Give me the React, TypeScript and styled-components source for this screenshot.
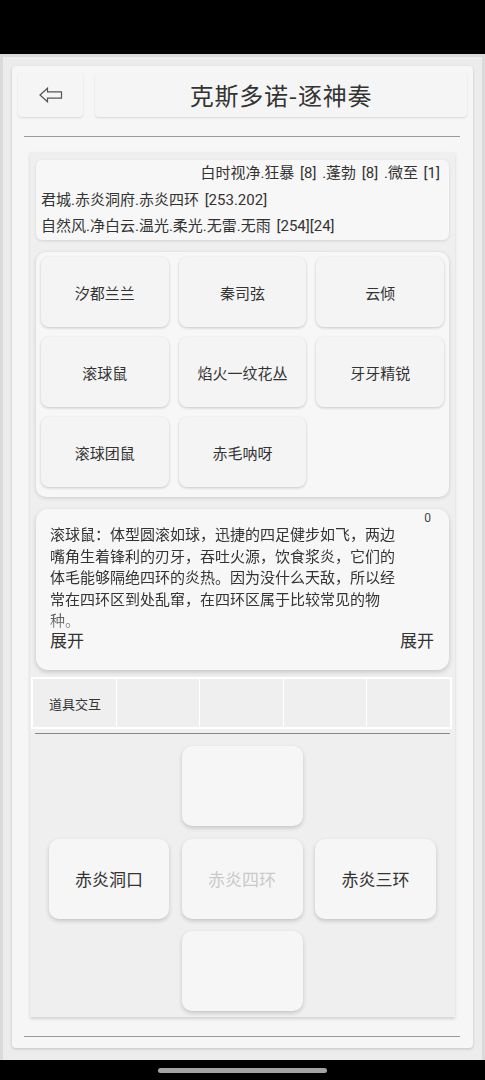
import React from 'react';
import styled, { createGlobalStyle } from 'styled-components';

const GlobalStyle = createGlobalStyle`
    html, body {
        margin: 0;
        padding: 0;
        background: #000;
    }
    body {
        font-family: Roboto, "Noto Sans CJK SC", sans-serif;
        color: #333;
    }
`

const Screen = styled.div`
    width: 485px;
    height: 1080px;
    display: flex;
    flex-direction: column;
    background: #000;
`

const StatusBar = styled.div`
    height: 54px;
    flex-shrink: 0;
`

const Frame = styled.div`
    height: 1006px;
    box-sizing: border-box;
    border: 3px solid #dadada;
    border-bottom: none;
    background: #ececec;
    padding: 9px 9px 12px;
`

const Card = styled.div`
    height: 100%;
    box-sizing: border-box;
    background: #f6f6f6;
    border-radius: 4px;
    box-shadow: 0 1px 3px rgba(0, 0, 0, 0.18);
    padding: 6px 6px 0;
    display: flex;
    flex-direction: column;
`

const Header = styled.div`
    display: flex;
    gap: 12px;
    height: 45px;
`

const HeaderBox = styled.div<{ $width?: number }>`
    ${ props => props.$width ? `width: ${ props.$width }px;` : 'flex: 1;' }
    display: flex;
    align-items: center;
    justify-content: center;
    background: #f5f5f5;
    border-radius: 4px;
    box-shadow: 0 1px 2px rgba(0, 0, 0, 0.12);
    font-family: "Noto Sans CJK SC", sans-serif;
    font-size: 24px;
    letter-spacing: 0.8px;
    color: #333;
`

const Divider = styled.div<{ $top: number }>`
    height: 1px;
    flex-shrink: 0;
    background: #9a9a9a;
    margin: ${ props => props.$top }px 7px 0 6px;
`

const Panel = styled.div`
    margin: 15px 12px 0;
    height: 865px;
    flex-shrink: 0;
    box-sizing: border-box;
    padding: 8px 6px 0;
    background: #efefef;
    box-shadow: 0 2px 3px rgba(0, 0, 0, 0.15);
    display: flex;
    flex-direction: column;
`

const InfoBox = styled.div`
    height: 80px;
    flex-shrink: 0;
    box-sizing: border-box;
    padding: 0 9px 0 5px;
    background: #f7f7f7;
    border-radius: 6px;
    box-shadow: 0 1px 3px rgba(0, 0, 0, 0.12);
    font-size: 15px;
    line-height: 26.5px;
    word-spacing: 2px;
`

const InfoLine = styled.div<{ $right?: boolean }>`
    text-align: ${ props => props.$right ? 'right' : 'left' };
    white-space: nowrap;
`

const GridBox = styled.div`
    margin-top: 12px;
    height: 245px;
    flex-shrink: 0;
    box-sizing: border-box;
    padding: 5px;
    background: #f7f7f7;
    border-radius: 10px;
    box-shadow: 0 1px 4px rgba(0, 0, 0, 0.15);
    display: grid;
    grid-template-columns: repeat(3, 1fr);
    grid-auto-rows: 70px;
    gap: 10px;
`

const NpcButton = styled.div`
    display: flex;
    align-items: center;
    justify-content: center;
    background: #f4f4f4;
    border-radius: 8px;
    box-shadow: 0 1px 3px rgba(0, 0, 0, 0.2);
    font-size: 15px;
    color: #333;
`

const DescBox = styled.div`
    margin-top: 12px;
    height: 161px;
    flex-shrink: 0;
    box-sizing: border-box;
    padding: 0 15px 0 14px;
    background: #f7f7f7;
    border-radius: 12px;
    box-shadow: 0 2px 5px rgba(0, 0, 0, 0.18);
    display: flex;
    flex-direction: column;
`

const DescTop = styled.div`
    display: flex;
    justify-content: space-between;
    align-items: flex-start;
`

const DescText = styled.div`
    width: 354px;
    margin-top: 14px;
    font-family: "Noto Sans CJK SC", sans-serif;
    font-size: 15px;
    line-height: 21.5px;
    height: 107.5px;
    overflow: hidden;
    color: #333;
    -webkit-mask-image: linear-gradient(to bottom, #000 78%, rgba(0, 0, 0, 0.45) 100%);
    mask-image: linear-gradient(to bottom, #000 78%, rgba(0, 0, 0, 0.45) 100%);
`

const Count = styled.div`
    margin: 2px 3px 0 0;
    font-size: 12px;
    line-height: 14px;
    color: #444;
`

const DescFoot = styled.div`
    display: flex;
    justify-content: space-between;
    font-size: 17px;
    line-height: 20px;
    color: #333;
`

const TabRow = styled.div`
    margin: 7px -3px 0 -5px;
    height: 52px;
    flex-shrink: 0;
    box-sizing: border-box;
    border: 2px solid #fff;
    background: #fff;
    display: grid;
    grid-template-columns: repeat(5, 1fr);
    gap: 1px;
`

const TabCell = styled.div`
    background: #efefef;
    display: flex;
    align-items: center;
    padding-left: 16px;
    font-size: 13px;
    color: #333;
`

const MapLine = styled.div`
    margin: 4px -1px 0;
    height: 1px;
    flex-shrink: 0;
    background: #888;
`

const MapGrid = styled.div`
    padding-top: 12px;
    display: grid;
    grid-template-columns: 120px 121px 121px;
    grid-auto-rows: 80px;
    column-gap: 12.5px;
    row-gap: 12.5px;
    justify-content: center;
`

const MapButton = styled.div<{ $col: number; $row: number; $disabled?: boolean }>`
    grid-column: ${ props => props.$col };
    grid-row: ${ props => props.$row };
    display: flex;
    align-items: center;
    justify-content: center;
    background: #f6f6f6;
    border-radius: 10px;
    box-shadow: 0 2px 4px rgba(0, 0, 0, 0.18);
    font-size: 17px;
    color: ${ props => props.$disabled ? '#cacaca' : '#333' };
`

const NavBar = styled.div`
    flex: 1;
    display: flex;
    justify-content: center;
    padding-top: 8px;
`

const HomePill = styled.div`
    width: 169px;
    height: 5px;
    border-radius: 3px;
    background: #a3a3a3;
`

const npcs = [ '汐都兰兰', '秦司弦', '云倾', '滚球鼠', '焰火一纹花丛', '牙牙精锐', '滚球团鼠', '赤毛呐呀' ];

const BackArrow = () => (
    <svg width="24" height="16" viewBox="0 0 24 16">
        <polygon points="1,8 8.5,1.2 8.5,4.8 22.5,4.8 22.5,11.2 8.5,11.2 8.5,14.8" fill="none" stroke="#555" strokeWidth="1.2" strokeLinejoin="miter"/>
    </svg>
);

const App: React.FC = () => {
    return (
        <Screen>
            <GlobalStyle/>
            <StatusBar/>
            <Frame>
                <Card>
                    <Header>
                        <HeaderBox $width={ 65 }><BackArrow/></HeaderBox>
                        <HeaderBox>克斯多诺-逐神奏</HeaderBox>
                    </Header>
                    <Divider $top={ 19 }/>
                    <Panel>
                        <InfoBox>
                            <InfoLine $right>白时视净.狂暴 [8] .蓬勃 [8] .微至 [1]</InfoLine>
                            <InfoLine>君城.赤炎洞府.赤炎四环 [253.202]</InfoLine>
                            <InfoLine>自然风.净白云.温光.柔光.无雷.无雨 [254][24]</InfoLine>
                        </InfoBox>
                        <GridBox>
                            { npcs.map(name => <NpcButton key={ name }>{ name }</NpcButton>) }
                        </GridBox>
                        <DescBox>
                            <DescTop>
                                <DescText>
                                    滚球鼠：体型圆滚如球，迅捷的四足健步如飞，两边嘴角生着锋利的刃牙，吞吐火源，饮食浆炎，它们的体毛能够隔绝四环的炎热。因为没什么天敌，所以经常在四环区到处乱窜，在四环区属于比较常见的物种。
                                </DescText>
                                <Count>0</Count>
                            </DescTop>
                            <DescFoot>
                                <span>展开</span>
                                <span>展开</span>
                            </DescFoot>
                        </DescBox>
                        <TabRow>
                            <TabCell>道具交互</TabCell>
                            <TabCell/>
                            <TabCell/>
                            <TabCell/>
                            <TabCell/>
                        </TabRow>
                        <MapLine/>
                        <MapGrid>
                            <MapButton $col={ 2 } $row={ 1 }/>
                            <MapButton $col={ 1 } $row={ 2 }>赤炎洞口</MapButton>
                            <MapButton $col={ 2 } $row={ 2 } $disabled>赤炎四环</MapButton>
                            <MapButton $col={ 3 } $row={ 2 }>赤炎三环</MapButton>
                            <MapButton $col={ 2 } $row={ 3 }/>
                        </MapGrid>
                    </Panel>
                    <Divider $top={ 19 }/>
                </Card>
            </Frame>
            <NavBar>
                <HomePill/>
            </NavBar>
        </Screen>
    );
}

export default App;
